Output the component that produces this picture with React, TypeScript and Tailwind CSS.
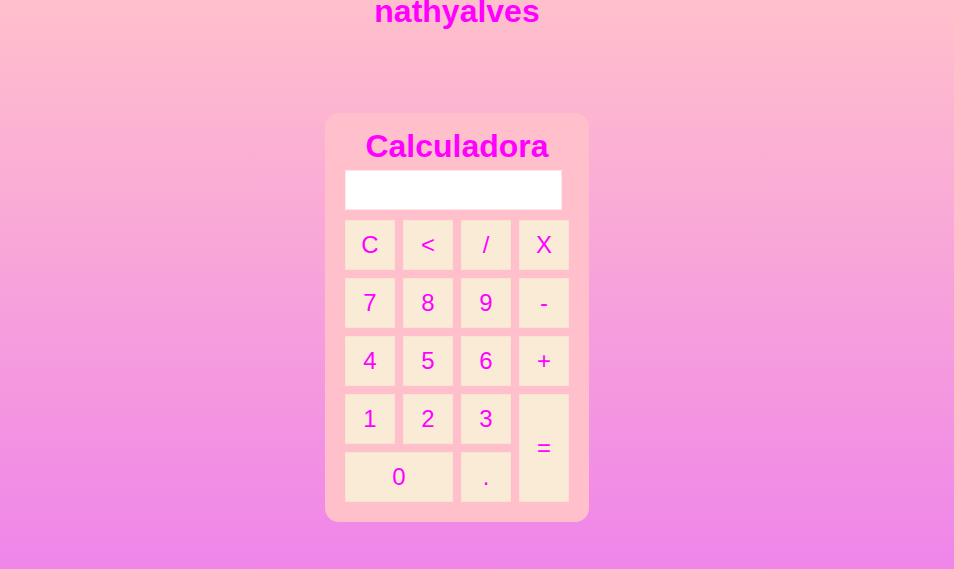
const keys = [
  { label: "C" },
  { label: "<" },
  { label: "/" },
  { label: "X" },
  { label: "7" },
  { label: "8" },
  { label: "9" },
  { label: "-" },
  { label: "4" },
  { label: "5" },
  { label: "6" },
  { label: "+" },
  { label: "1" },
  { label: "2" },
  { label: "3" },
  { label: "=", span: "row-span-2" },
  { label: "0", span: "col-span-2" },
  { label: "." },
];

export default function App() {
  return (
    <div className="min-h-screen w-full pr-[40px] bg-[linear-gradient(to_bottom,#ffc0cb,#ef85ea)] flex flex-col items-center font-['Liberation_Sans',Arial,sans-serif] overflow-hidden">
      {/* Page title */}
      <h1 className="mt-[-7px] text-[32px] leading-[37px] font-bold text-[#ff00ff]">
        nathyalves
      </h1>

      {/* Calculator card */}
      <div className="mt-[83px] w-[264px] bg-[#ffc0cb] rounded-[14px] px-[20px] pt-[15px] pb-[20px]">
        <h2 className="text-[32px] leading-[37px] font-bold text-[#ff00ff] text-center">
          Calculadora
        </h2>

        <input
          type="text"
          readOnly
          className="mt-[5px] block w-[217px] h-[40px] bg-white border border-[#ffe6ea] outline-none"
        />

        <div className="mt-[10px] grid grid-cols-[repeat(4,50px)] auto-rows-[50px] gap-[8px]">
          {keys.map((k) => (
            <button
              key={k.label}
              className={`${k.span ?? ""} bg-[#faebd7] border border-[#fbe3d3] text-[#ff00ff] text-[24px] flex items-center justify-center`}
            >
              {k.label}
            </button>
          ))}
        </div>
      </div>
    </div>
  );
}
